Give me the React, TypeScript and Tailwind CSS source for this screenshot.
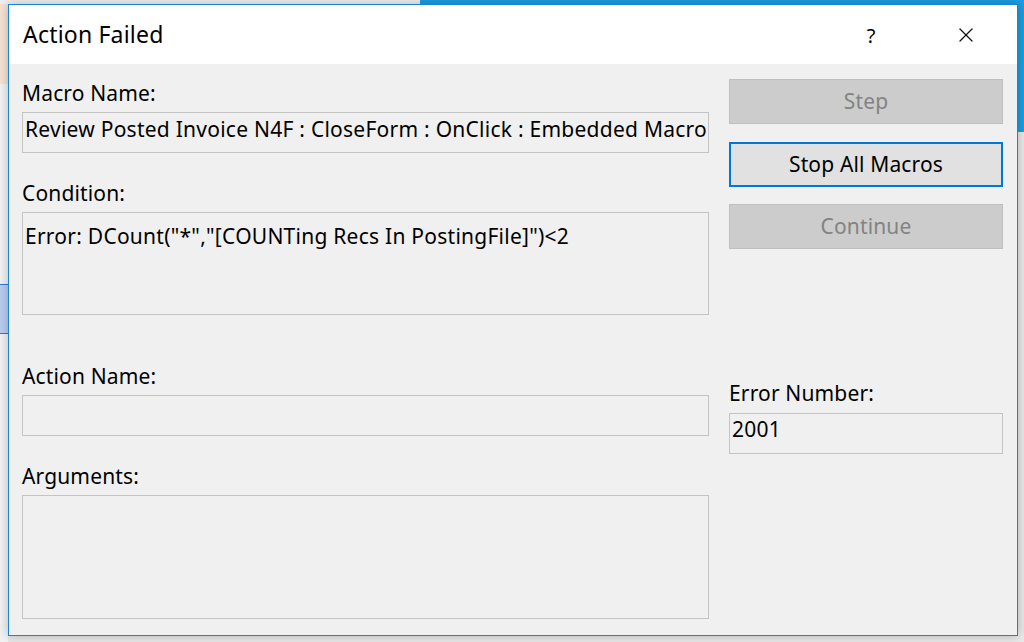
import { X } from 'lucide-react';

const font = { fontFamily: '"Noto Sans", "Open Sans", sans-serif' };

const Field = ({ className = '', children }: { className?: string; children?: React.ReactNode }) => (
  <div className={`border border-[#c4c4c4] bg-[#f0f0f0] px-[2px] text-[21px] leading-[26px] tracking-[0.25px] text-black whitespace-nowrap overflow-hidden ${className}`}>
    {children}
  </div>
);

const Label = ({ children }: { children: React.ReactNode }) => (
  <div className="text-[21px] leading-[26px] tracking-[0.15px] text-black mb-[6px]">{children}</div>
);

const DialogButton = ({ label, disabled, focused }: { label: string; disabled?: boolean; focused?: boolean }) => {
  if (disabled) {
    return (
      <div className="h-[45px] flex items-center justify-center border border-[#bfbfbf] bg-[#cccccc] text-[21px] tracking-[0.15px] text-[#838383]">
        {label}
      </div>
    );
  }
  return (
    <div
      className={`h-[45px] flex items-center justify-center bg-[#e1e1e1] text-[21px] tracking-[0.15px] text-black ${
        focused ? 'border-2 border-[#0078d7]' : 'border border-[#adadad]'
      }`}
    >
      {label}
    </div>
  );
};

export default function App() {
  return (
    <div className="relative w-[1024px] h-[642px] overflow-hidden bg-[#e9e9e9]" style={font}>
      {/* desktop behind the dialog */}
      <div className="absolute left-0 top-0 w-[8px] h-[642px] bg-[#f2f2f2]">
        <div className="h-[4px] bg-[#e8e8e8]" />
        <div className="h-[80px] bg-[#f6e3d3]" />
        <div className="mt-[200px] h-[50px] bg-[#b9cdf0] border-y border-[#3a74d0]" />
      </div>
      <div className="absolute right-0 top-0 w-[8px] h-[132px] bg-[#1b9ee3]" />
      <div className="absolute left-0 top-0 w-[1024px] h-[4px] bg-[#1b9ee3]" />
      <div className="absolute left-0 top-0 w-[420px] h-[4px] bg-[#f0f0f0]" />

      {/* dialog window */}
      <div className="absolute left-[8px] top-[4px] w-[1010px] h-[632px] flex flex-col border border-[#1883d7] bg-[#f0f0f0] shadow-[0_0_10px_rgba(0,0,0,0.25)]">
        {/* Title bar */}
        <div className="h-[59px] flex-shrink-0 flex items-center bg-white">
          <div className="pl-[14px] text-[23px] tracking-[0.2px] text-black flex-1">Action Failed</div>
          <div className="w-[40px] text-center text-[20px] text-black mr-[55px] pt-[2px]">?</div>
          <div className="w-[40px] flex justify-center mr-[31px]">
            <X size={24} strokeWidth={1.3} color="#111" />
          </div>
        </div>

        {/* Body */}
        <div className="flex-1 flex gap-[20px] px-[13px]">
          {/* Left column */}
          <div className="w-[687px] pt-[16px]">
            <Label>Macro Name:</Label>
            <Field className="h-[41px] pt-[3px]">Review Posted Invoice N4F : CloseForm : OnClick : Embedded Macro</Field>

            <div className="mt-[27px]" />
            <Label>Condition:</Label>
            <Field className="h-[103px] pt-[10px]">Error: DCount("*","[COUNTing Recs In PostingFile]")&lt;2</Field>

            <div className="mt-[48px]" />
            <Label>Action Name:</Label>
            <Field className="h-[41px]" />

            <div className="mt-[27px]" />
            <Label>Arguments:</Label>
            <Field className="h-[124px]" />
          </div>

          {/* Right column */}
          <div className="w-[274px] pt-[15px] flex flex-col">
            <DialogButton label="Step" disabled />
            <div className="mt-[18px]" />
            <DialogButton label="Stop All Macros" focused />
            <div className="mt-[17px]" />
            <DialogButton label="Continue" disabled />

            <div className="mt-[131px]" />
            <div className="text-[21px] leading-[26px] tracking-[0.15px] text-black mb-[7px]">Error Number:</div>
            <Field className="h-[41px] pt-[2px]">2001</Field>
          </div>
        </div>
      </div>
    </div>
  );
}
